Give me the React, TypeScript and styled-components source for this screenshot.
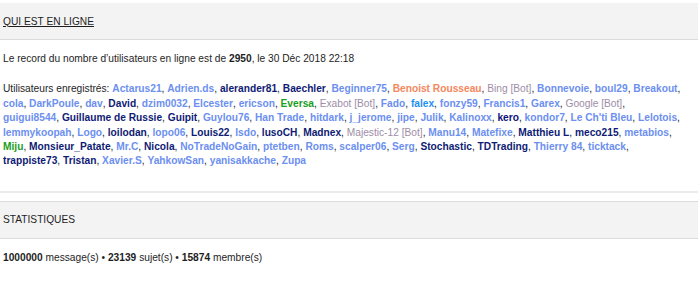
import { Fragment } from 'react';
import styled, { createGlobalStyle } from 'styled-components';

const GlobalStyle = createGlobalStyle`
  body {
    margin: 0;
    background: #ffffff;
    font-family: 'Liberation Sans', Arial, sans-serif;
    font-size: 10.2px;
    color: #1e1e1e;
  }
`;

type Rank = 'member' | 'admin' | 'modo' | 'bot' | 'green' | 'bright' | 'deep';

const rankColors: Record<Rank, string> = {
  member: '#6c8ff0',
  admin: '#f4875c',
  modo: '#0f1b74',
  bot: '#9e8da7',
  green: '#1a9e22',
  bright: '#1c8ff2',
  deep: '#0b137a',
};

// one array per printed line, as the forum wraps them
const userRows: [string, Rank][][] = [
  [
    ['Actarus21', 'member'], ['Adrien.ds', 'member'], ['alerander81', 'modo'], ['Baechler', 'modo'],
    ['Beginner75', 'member'], ['Benoist Rousseau', 'admin'], ['Bing [Bot]', 'bot'], ['Bonnevoie', 'member'],
    ['boul29', 'member'], ['Breakout', 'member'],
  ],
  [
    ['cola', 'member'], ['DarkPoule', 'member'], ['dav', 'member'], ['David', 'modo'],
    ['dzim0032', 'member'], ['Elcester', 'member'], ['ericson', 'member'], ['Eversa', 'green'],
    ['Exabot [Bot]', 'bot'], ['Fado', 'member'], ['falex', 'bright'], ['fonzy59', 'member'],
    ['Francis1', 'member'], ['Garex', 'member'], ['Google [Bot]', 'bot'],
  ],
  [
    ['guigui8544', 'member'], ['Guillaume de Russie', 'modo'], ['Guipit', 'modo'], ['Guylou76', 'member'],
    ['Han Trade', 'member'], ['hitdark', 'member'], ['j_jerome', 'member'], ['jipe', 'member'],
    ['Julik', 'member'], ['Kalinoxx', 'member'], ['kero', 'deep'], ['kondor7', 'member'],
    ["Le Ch'ti Bleu", 'member'], ['Lelotois', 'member'],
  ],
  [
    ['lemmykoopah', 'member'], ['Logo', 'member'], ['loilodan', 'modo'], ['lopo06', 'member'],
    ['Louis22', 'modo'], ['lsdo', 'member'], ['lusoCH', 'modo'], ['Madnex', 'modo'],
    ['Majestic-12 [Bot]', 'bot'], ['Manu14', 'member'], ['Matefixe', 'member'], ['Matthieu L', 'modo'],
    ['meco215', 'modo'], ['metabios', 'member'],
  ],
  [
    ['Miju', 'green'], ['Monsieur_Patate', 'modo'], ['Mr.C', 'member'], ['Nicola', 'modo'],
    ['NoTradeNoGain', 'member'], ['ptetben', 'member'], ['Roms', 'member'], ['scalper06', 'member'],
    ['Serg', 'member'], ['Stochastic', 'modo'], ['TDTrading', 'modo'], ['Thierry 84', 'member'],
    ['ticktack', 'member'],
  ],
  [
    ['trappiste73', 'modo'], ['Tristan', 'modo'], ['Xavier.S', 'member'], ['YahkowSan', 'member'],
    ['yanisakkache', 'member'], ['Zupa', 'member'],
  ],
];

const Page = styled.div`
  padding: 3px 2px 0 0;
`;

const Section = styled.section<{ $divider?: boolean }>`
  border-bottom: ${p => (p.$divider ? '2px solid #ececec' : 'none')};
  margin-bottom: 8px;
`;

const Header = styled.div<{ $topLine?: boolean }>`
  display: flex;
  align-items: center;
  height: 36px;
  padding: 0 3px;
  background: #f3f3f3;
  border-top: ${p => (p.$topLine ? '1px solid #dcdcdc' : 'none')};
  border-bottom: 1px solid #dcdcdc;
`;

const Title = styled.a`
  margin: 0;
  font-size: inherit;
  font-weight: normal;
  color: #1e1e1e;
  text-transform: uppercase;
  text-decoration: ${p => (p.href ? 'underline' : 'none')};
`;

const Body = styled.div`
  padding: 12px 0 22px 3px;
  line-height: 14.4px;
`;

const Line = styled.p`
  margin: 0 0 16px;
  &:last-child {
    margin-bottom: 0;
  }
`;

const UserLink = styled.a<{ $rank: Rank }>`
  color: ${p => rankColors[p.$rank]};
  font-weight: ${p => (p.$rank === 'bot' ? 'normal' : 'bold')};
  text-decoration: none;
`;

export default function App() {
  return (
    <Page>
      <GlobalStyle />
      <Section $divider>
        <Header>
          <Title href="#">Qui est en ligne</Title>
        </Header>
        <Body>
          <Line>
            Le record du nombre d’utilisateurs en ligne est de <b>2950</b>, le 30 Déc 2018 22:18
          </Line>
          <Line>
            Utilisateurs enregistrés:{' '}
            {userRows.map((row, r) => (
              <Fragment key={r}>
                {row.map(([name, rank], i) => {
                  const last = r === userRows.length - 1 && i === row.length - 1;
                  return (
                    <span key={name}>
                      <UserLink href="#" $rank={rank}>
                        {name}
                      </UserLink>
                      {last ? '' : ', '}
                    </span>
                  );
                })}
                {r < userRows.length - 1 && <br />}
              </Fragment>
            ))}
          </Line>
        </Body>
      </Section>
      <Section>
        <Header $topLine>
          <Title as="h3">Statistiques</Title>
        </Header>
        <Body>
          <Line>
            <b>1000000</b> message(s) • <b>23139</b> sujet(s) • <b>15874</b> membre(s)
          </Line>
        </Body>
      </Section>
    </Page>
  );
}
